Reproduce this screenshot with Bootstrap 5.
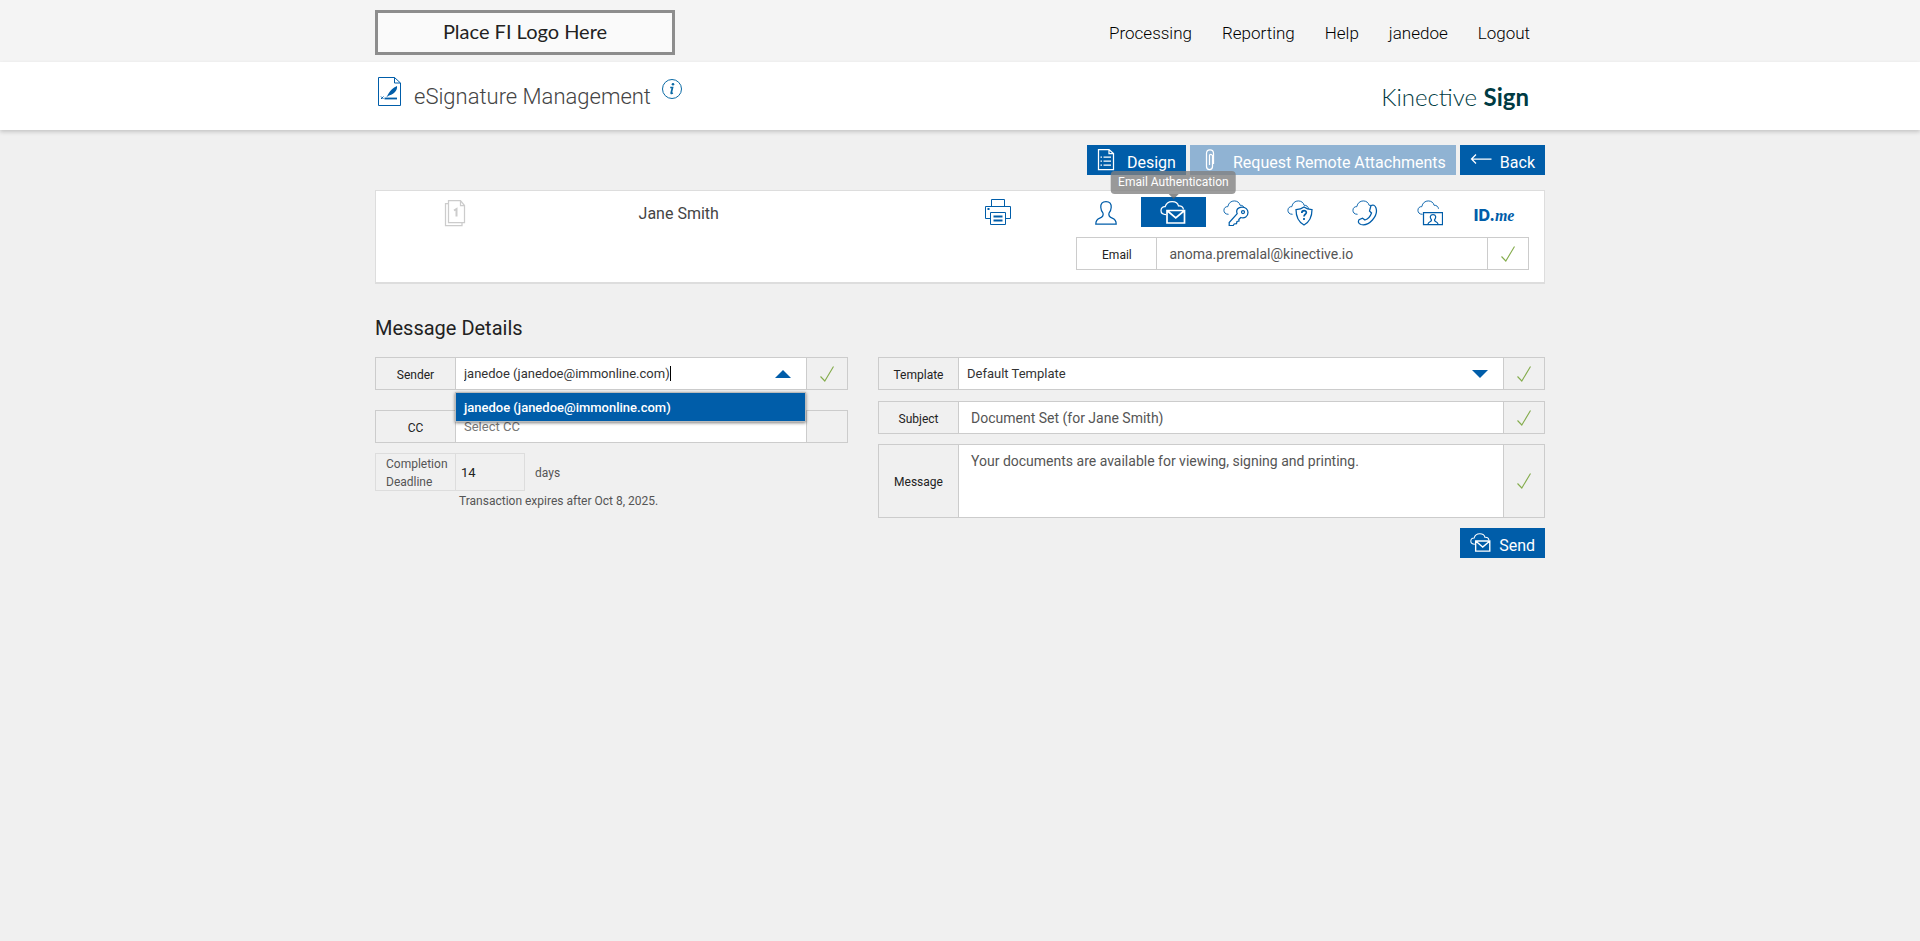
<!DOCTYPE html>
<html lang="en">
<head>
<meta charset="utf-8">
<meta name="viewport" content="width=device-width, initial-scale=1">
<title>eSignature Management</title>
<link href="https://cdn.jsdelivr.net/npm/bootstrap@5.3.0/dist/css/bootstrap.min.css" rel="stylesheet">
<style>
:root { --brand: #005da9; --line: #ccc; --page: #f0f0f0; }
body { background: var(--page); font-family: Roboto, "Liberation Sans", sans-serif; font-size: 12px; line-height: 18px; color: #222; }
.wrap { max-width: 1170px; margin: 0 auto; }
.ico { fill: none; stroke: currentColor; stroke-width: 1.25; flex: none; }

.topbar { background: #f4f4f4; min-height: 62px; padding-top: 2px; }
.fi-logo { width: 300px; height: 45px; border: 3px solid #8d8d8d; background: #fafafa; font: 20px/37px Lato, sans-serif; color: #222; text-align: center; }
.topbar .nav-link { color: #000; font-size: 17px; font-weight: 300; line-height: 24px; padding: 2px 15px 0; }
.titlebar { background: #fff; min-height: 68px; box-shadow: 0 2px 4px rgba(0,0,0,.18); position: relative; }
.titlebar h1 { font-size: 22px; font-weight: 300; line-height: 30px; color: #444; margin: 0; padding-top: 5px; }
.blue { color: var(--brand); }
.sig-icon { margin: 0 9px 0 3px; }
.info-btn { border: 0; background: none; padding: 0; color: #0a6aa5; margin-left: 9px; }
.kin { font: 300 24px/30px Lato, sans-serif; color: #003b43; padding-top: 6px; }
.kin b { font-weight: 700; }

.actions { padding: 15px 0; }
.btn-flat { --bs-btn-color: #fff; --bs-btn-bg: var(--brand); --bs-btn-border-width: 0; --bs-btn-border-radius: 0; --bs-btn-hover-color: #fff; --bs-btn-hover-bg: #004a88; --bs-btn-disabled-color: #fff; --bs-btn-disabled-bg: #90b3d3; --bs-btn-disabled-opacity: 1; --bs-btn-padding-x: 10px; --bs-btn-padding-y: 0; --bs-btn-font-size: 16px; height: 30px; display: flex; align-items: center; gap: 8px; }
.btn-flat span { padding-top: 6px; line-height: 24px; }

.signer { background: #fff; border: 1px solid #ddd; border-bottom-width: 2px; display: grid; grid-template-columns: 157fr 292fr 96fr 156fr 453fr; padding: 6px 15px 12px 0; min-height: 94px; }
.signer .who { font-size: 16px; line-height: 22px; color: #444; padding-top: 6px; }
.doc { padding: 2px 0 0 2px; color: #ccc; }
.auth { display: flex; }
.auth button { flex: 1 1 0; height: 30px; border: 0; background: none; color: var(--brand); padding: 2px 0 0; position: relative; display: flex; align-items: center; justify-content: center; }
.auth button:not(.on) > * { margin-right: 5px; }
.auth button.on { background: var(--brand); color: #fff; }
.tip { position: absolute; left: 50%; bottom: 100%; transform: translateX(-50%); margin-bottom: 3px; background: rgba(128,128,128,.78); color: #fff; border-radius: 4px; padding: 2px 7px 3px; white-space: nowrap; z-index: 5; }
.tip::after { content: ""; position: absolute; left: 50%; top: 100%; margin-left: -5px; border: 5px solid transparent; border-top-color: rgba(100,100,100,.75); border-bottom: 0; }
.idme { font: 800 16px/20px Inter, sans-serif; padding-top: 4px; }
.idme i { font: italic 700 16px/20px "Liberation Serif", serif; }
.mail { margin-top: 10px; }

.section-title { font-size: 20px; line-height: 24px; font-weight: 400; color: #222; margin: 32px 0 17px; }
.fields { display: grid; grid-template-columns: 473fr 667fr; gap: 30px; }
.field { min-height: 33px; }
.field .input-group-text, .field .form-control, .field .form-select { border-color: var(--line); border-radius: 0; padding-top: 0; padding-bottom: 0; }
.field .form-control, .field .form-select { font-size: 14px; line-height: 20px; color: #555; background-color: #fff; padding-left: 12px; box-shadow: none; }
.field .input-group-text { background: transparent; font-size: 12px; color: #222; justify-content: center; padding-left: 0; padding-right: 0; }
.field label.input-group-text { width: 81px; padding-top: 2px; }
.field .state { width: 42px; padding-right: 1px; }
.field .form-control.pick, .field .form-select.pick { font-size: 13px; color: #333; padding: 0 36px 0 8px; }
.pick::placeholder { color: #777; }
.field .pick.form-select { background-image: url("data:image/svg+xml,%3Csvg xmlns='http://www.w3.org/2000/svg' viewBox='0 0 16 8'%3E%3Cpath fill='%23005da9' d='M0 0h16l-8 8z'/%3E%3C/svg%3E"); background-size: 16px 8px; background-position: right 15px center; }
.field .pick.open { background: #fff url("data:image/svg+xml,%3Csvg xmlns='http://www.w3.org/2000/svg' viewBox='0 0 16 8'%3E%3Cpath fill='%23005da9' d='M0 8h16l-8-8z'/%3E%3C/svg%3E") no-repeat right 15px center / 16px 8px; }
.caret { position: absolute; left: 296px; top: 9px; width: 1px; height: 15px; background: #000; z-index: 6; }
.options { position: absolute; left: 81px; right: 42px; top: 35px; z-index: 10; box-shadow: 0 1px 3px rgba(0,0,0,.5); list-style: none; margin: 0; padding: 0; border: 1px solid #bbb; }
.options li { background: var(--brand); color: #fff; font-size: 13px; font-weight: 500; line-height: 28px; padding: 1px 8px 0; height: 28px; }
.tick { fill: none; stroke: #84ac4c; stroke-width: 1.1; }
.cc { margin-top: 20px; }
.deadline { color: #555; margin-top: 10px; }
.deadline label { width: 81px; height: 38px; border: 1px solid #ddd; padding: 1px 0 0 10px; }
.deadline input { width: 70px; height: 38px; border: 1px solid #ddd; background: transparent; padding: 0 5px; margin-left: -1px; font-size: 13px; color: #222; }
.deadline span { padding: 2px 0 0 10px; }
.expires { color: #555; padding: 1px 0 0 84px; }
.right-col { gap: 10px; }
.tpl { margin-bottom: 1px; }
.fields .field textarea.form-control { height: 74px; resize: none; padding-top: 6px; }
</style>
</head>
<body>
<svg width="0" height="0" class="position-absolute" aria-hidden="true">
  <symbol id="tick" viewBox="0 0 14 16"><path d="M.5 10.5 4.8 15 13.5 .5"/></symbol>
  <symbol id="cloud" viewBox="0 0 26 26"><path d="M6 15.500C2.500 15.500 1 13.500 1 11.200 1 8.500 3 7 5.200 7.200 6 3 9 1 12.200 1c3.200 0 5.700 1.800 6.300 4.700 2.700-.2 4.500 1.600 4.800 3.800"/></symbol>
  <symbol id="cloudmail" viewBox="0 0 26 26"><path d="M6 14.500C3 14.500 1 13 1 10.500 1 8 3 6.500 5.200 6.700 6 3 9 1.500 12.200 1.500c3.200 0 5.700 1.500 6.300 4.500 2.500-.2 4.500 1 5 3.500"/><path d="M7 10.500h17.500v12.500H7zM7 10.500l8.750 7.500 8.750-7.500" stroke-width="1.700"/></symbol>
</svg>

<header class="topbar d-flex align-items-center">
  <div class="wrap w-100 d-flex justify-content-between align-items-center">
    <div class="fi-logo">Place FI Logo Here</div>
    <nav class="nav">
      <a class="nav-link" href="#">Processing</a>
      <a class="nav-link" href="#">Reporting</a>
      <a class="nav-link" href="#">Help</a>
      <a class="nav-link" href="#">janedoe</a>
      <a class="nav-link" href="#">Logout</a>
    </nav>
  </div>
</header>

<div class="titlebar d-flex align-items-center">
  <div class="wrap w-100 d-flex justify-content-between align-items-center pb-1">
    <div class="d-flex">
      <svg class="ico blue sig-icon" width="23" height="29" viewBox="0 0 23 29"><path d="M.5.500h16l6 5.500v22.500H.500zM16.500.500v5.500h6" stroke-width="1"/><path d="M3 19.500l2.500 2.500M5.500 19.500 3 22" stroke-width="1"/><path d="M6.500 21.500h12.500" stroke-width="1.800"/><path fill="currentColor" stroke="none" d="M8 20.500c2-1.500 2.500-7.500 11-11.500.5 3.500-1.500 7.500-8 9.500z"/></svg>
      <h1 class="ms-1">eSignature Management</h1>
      <button class="info-btn align-self-start" type="button" aria-label="Help"><svg class="ico" width="24" height="24" viewBox="0 0 24 24"><circle cx="12" cy="12" r="9.500" stroke-width="1"/><circle cx="13" cy="7.300" r="1.300" fill="currentColor" stroke="none"/><path d="M10.200 10.500h2.300l-1.300 5.500q-.1 1 1.600-.2" stroke-width="1.700"/></svg></button>
    </div>
    <div class="kin pe-3">Kinective <b>Sign</b></div>
  </div>
</div>

<main class="wrap">
  <div class="d-flex justify-content-end gap-1 actions">
    <button class="btn btn-flat" type="button"><svg class="ico" width="22" height="24" viewBox="1 0 22 24"><path d="M2.500 1.500h10.500l4.500 4v16h-15zM13 1.500v4h4.500M7.500 9h7.500M7.500 13h7.500M7.500 17h7.500M4.500 9h1.500M4.500 13h1.500M4.500 17h1.500"/></svg><span>Design</span></button>
    <button class="btn btn-flat" type="button" disabled><svg class="ico" width="25" height="24" viewBox="0 0 25 24"><path d="M12.500 7v11.500c0 4-6 4-6 0V5.500c0-5 7-5 7 0V16M9.500 17V7.500c0-1.500 2.500-1.500 2.500 0"/></svg><span>Request Remote Attachments</span></button>
    <button class="btn btn-flat" type="button"><svg class="ico" width="22" height="24" viewBox="0 0 22 24"><path d="M1.500 11h20M6 6.500 1.500 11 6 15.500"/></svg><span>Back</span></button>
  </div>

  <section class="signer">
    <div class="text-center doc"><svg class="ico" width="22" height="28" viewBox="0 3 22 28"><path d="M4.500 4.500h12l4 5v17h-16zM16.500 4.500v5h4M4.500 7.500h-3v22h16.500v-3"/><path d="M10 14.500l2.500-1.500v7.500" stroke-width="2"/></svg></div>
    <div class="who text-center">Jane Smith</div>
    <div></div>
    <div class="text-center"><svg class="ico blue" width="26" height="28" viewBox="0 0 26 28"><path d="M6.500 9.500v-7h13v7M5.500 21.500h-5v-12h25v12h-5M5.500 15.500h15v12h-15z" stroke-width="1"/><path d="M8.500 19.500h9M8.500 23.500h9M2.500 12h2" stroke-width="1.800"/></svg></div>
    <div>
      <div class="auth">
        <button type="button" aria-label="No authentication"><svg class="ico" width="26" height="26" viewBox="0 0 26 26"><path d="M13 1.500c3.800 0 5.500 2.500 5.200 6-.2 3-.8 4-2.200 5.700-.8 3 .6 4 3.200 5 3.200 1.200 4 3 4 6H2.800c0-3 .8-4.800 4-6 2.600-1 4-2 3.200-5C8.600 11.500 8 10.500 7.800 7.500 7.500 4 9.200 1.500 13 1.500z"/></svg></button>
        <button class="on" type="button" aria-label="Email Authentication"><span class="tip">Email Authentication</span><svg class="ico" width="26" height="26"><use href="#cloudmail"/></svg></button>
        <button type="button" aria-label="Access code"><svg class="ico" width="26" height="26" viewBox="0 0 26 26"><use href="#cloud" width="24" height="24" stroke-width="1"/><path fill="#fff" d="M14.200 13.700C12.500 9.500 15.500 7 19 7c3.500 0 6 2.500 6 5.500 0 4-3.500 6.200-7.200 5l-2 2 .2 1.500-2 .5-.5 2.200-2.300.3-1 1.500H6.200v-3z"/><circle cx="20" cy="12" r="1.500"/></svg></button>
        <button type="button" aria-label="Security questions"><svg class="ico" width="26" height="26" viewBox="0 0 26 26"><use href="#cloud" width="24" height="24" stroke-width="1"/><path fill="#fff" d="M17 7c2.500 2 5 2.500 8 2.500 0 7-1.500 12-8 15.500-6.500-3.500-8-8.500-8-15.500 3 0 5.500-.5 8-2.500z"/><path d="M14.800 13c0-3.300 4.700-3 4.500-.3-.1 1.600-2.300 1.600-2.300 3.800M17 18v2" stroke-width="1.700"/></svg></button>
        <button type="button" aria-label="Phone authentication"><svg class="ico" width="26" height="26" viewBox="0 0 26 26"><use href="#cloud" width="24" height="24" stroke-width="1"/><path fill="#fff" d="M19 5.500c2-1 4-.5 5 2.500 2.500 8-7 18.500-15 16.500-3-1-3-3-2-4.800l3.500-1.500 2.500 1.800c3-1 5.500-4 6.500-7l-2-2z"/></svg></button>
        <button type="button" aria-label="ID verification"><svg class="ico" width="26" height="26" viewBox="0 0 26 26"><use href="#cloud" width="24" height="24" stroke-width="1"/><path fill="#fff" d="M6.500 12.500h19v12h-19z"/><path d="M11 24c.5-2.500 3.800-2 3.500-4-2-2.500-1.500-5.500 1.500-5.500s3.500 3 1.500 5.500c-.3 2 3 1.500 3.500 4"/></svg></button>
        <button type="button" aria-label="ID.me"><span class="idme">ID.<i>me</i></span></button>
      </div>
      <div class="input-group field mail flex-nowrap">
        <label class="input-group-text" for="email">Email</label>
        <input class="form-control" id="email" type="email" value="anoma.premalal@kinective.io">
        <span class="input-group-text state"><svg class="tick" width="14" height="16"><use href="#tick"/></svg></span>
      </div>
    </div>
  </section>

  <h2 class="section-title">Message Details</h2>

  <form class="fields">
    <div>
      <div class="input-group field flex-nowrap">
        <label class="input-group-text" for="sender">Sender</label>
        <input class="form-control pick open" id="sender" type="text" role="combobox" aria-expanded="true" aria-controls="senderlist" value="janedoe (janedoe@immonline.com)">
        <span class="input-group-text state"><svg class="tick" width="14" height="16"><use href="#tick"/></svg></span>
        <span class="caret"></span>
        <ul class="options" id="senderlist" role="listbox"><li role="option" aria-selected="true">janedoe (janedoe@immonline.com)</li></ul>
      </div>
      <div class="input-group field flex-nowrap cc">
        <label class="input-group-text" for="cc">CC</label>
        <input class="form-control pick" id="cc" type="text" placeholder="Select CC">
        <span class="input-group-text state"></span>
      </div>
      <div class="deadline d-flex align-items-center">
        <label for="days">Completion Deadline</label>
        <input id="days" type="text" value="14">
        <span>days</span>
      </div>
      <div class="expires">Transaction expires after Oct 8, 2025.</div>
    </div>
    <div class="d-flex flex-column right-col">
      <div class="input-group field flex-nowrap tpl">
        <label class="input-group-text" for="template">Template</label>
        <select class="form-select pick" id="template"><option>Default Template</option></select>
        <span class="input-group-text state"><svg class="tick" width="14" height="16"><use href="#tick"/></svg></span>
      </div>
      <div class="input-group field flex-nowrap">
        <label class="input-group-text" for="subject">Subject</label>
        <input class="form-control" id="subject" type="text" value="Document Set (for Jane Smith)">
        <span class="input-group-text state"><svg class="tick" width="14" height="16"><use href="#tick"/></svg></span>
      </div>
      <div class="input-group field flex-nowrap">
        <label class="input-group-text" for="message">Message</label>
        <textarea class="form-control" id="message">Your documents are available for viewing, signing and printing.</textarea>
        <span class="input-group-text state"><svg class="tick" width="14" height="16"><use href="#tick"/></svg></span>
      </div>
      <button class="btn btn-flat align-self-end" type="submit"><svg class="ico" width="21" height="24"><use href="#cloudmail"/></svg><span>Send</span></button>
    </div>
  </form>
</main>
<script src="https://cdn.jsdelivr.net/npm/bootstrap@5.3.0/dist/js/bootstrap.bundle.min.js"></script>
</body>
</html>
